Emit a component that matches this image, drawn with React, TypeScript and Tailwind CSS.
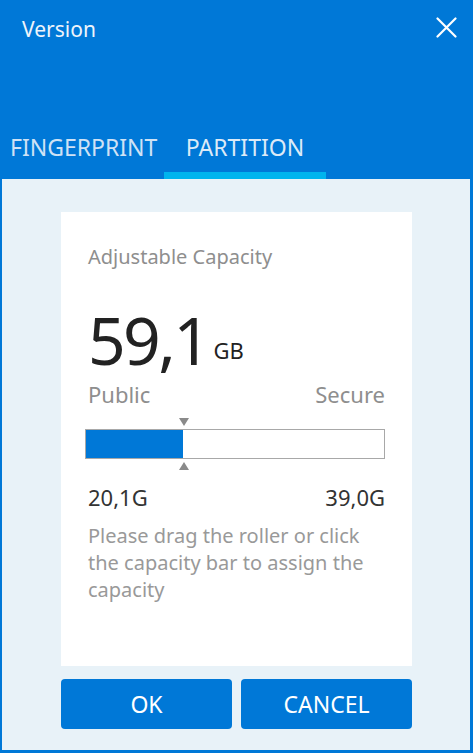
const font = { fontFamily: '"Noto Sans", "Open Sans", sans-serif' };

export default function App() {
  return (
    <div
      className="w-[473px] h-[753px] flex flex-col bg-[#0078d7] overflow-hidden"
      style={font}
    >
      {/* header */}
      <div className="h-[179px] flex flex-col">
        <div className="flex items-center justify-between pl-[22px] pr-[16px] pt-[17px] h-[41px]">
          <span className="text-[21px] text-[#eef4fb] leading-[24px]">Version</span>
          <svg width="21" height="21" viewBox="0 0 21 21" className="mt-[-4px]">
            <path d="M1.5 1.5 L19.5 19.5 M19.5 1.5 L1.5 19.5" stroke="white" strokeWidth="2.2" strokeLinecap="round" />
          </svg>
        </div>
        <div className="flex-1" />
        <div className="flex items-end h-[62px]">
          <div className="w-[164px] h-full flex items-center pb-[2px] pl-[10px] text-[23px] text-[#cfe2f5]">
            FINGERPRINT
          </div>
          <div className="w-[162px] h-full flex flex-col">
            <div className="flex-1 flex items-center justify-center pt-[5px] text-[23px] text-[#dceaf7]">
              PARTITION
            </div>
            <div className="h-[7px] bg-[#00b4ee]" />
          </div>
        </div>
      </div>

      {/* body */}
      <div className="flex-1 ml-[2px] mr-[3px] mb-[3px] bg-[#e8f2f8] flex flex-col pt-[33px] pl-[59px] pr-[58px]">
        <div className="h-[454px] bg-white pl-[27px] pr-[27px] flex flex-col">
          <div className="mt-[33px] text-[20px] leading-[24px] text-[#8e8e8e]">Adjustable Capacity</div>
          <div className="flex items-baseline mt-[40px] h-[60px]">
            <span className="text-[66px] leading-[60px] tracking-[-0.04em] text-[#222]">59,1</span>
            <span className="relative bottom-[6px] text-[22px] leading-[26px] ml-[5px] text-[#222]">GB</span>
          </div>
          <div className="flex justify-between text-[22px] leading-[26px] text-[#8e8e8e] mt-[12px]">
            <span>Public</span>
            <span>Secure</span>
          </div>
          <div className="relative mt-[11px] w-[300px] -ml-[3px] h-[52px] flex flex-col justify-center">
            <div className="h-[30px] border border-[#a8a8a8] flex">
              <div className="w-[97px] bg-[#0078d7]" />
            </div>
            <div className="absolute left-[94px] top-[0px] w-0 h-0 border-l-[5px] border-r-[5px] border-t-[8px] border-l-transparent border-r-transparent border-t-[#8a8a8a]" />
            <div className="absolute left-[94px] bottom-[0px] w-0 h-0 border-l-[5px] border-r-[5px] border-b-[8px] border-l-transparent border-r-transparent border-b-[#8a8a8a]" />
          </div>
          <div className="flex justify-between text-[22px] leading-[26px] text-[#333] mt-[14px]">
            <span>20,1G</span>
            <span>39,0G</span>
          </div>
          <div className="text-[20px] leading-[27px] text-[#999] mt-[12px] pr-[8px]">
            Please drag the roller or click the capacity bar to assign the capacity
          </div>
        </div>
        <div className="flex gap-[9px] mt-[13px]">
          <button className="flex-1 h-[50px] rounded-[4px] bg-[#0078d7] text-white text-[23px]">
            OK
          </button>
          <button className="flex-1 h-[50px] rounded-[4px] bg-[#0078d7] text-white text-[23px]">
            CANCEL
          </button>
        </div>
      </div>
    </div>
  );
}
